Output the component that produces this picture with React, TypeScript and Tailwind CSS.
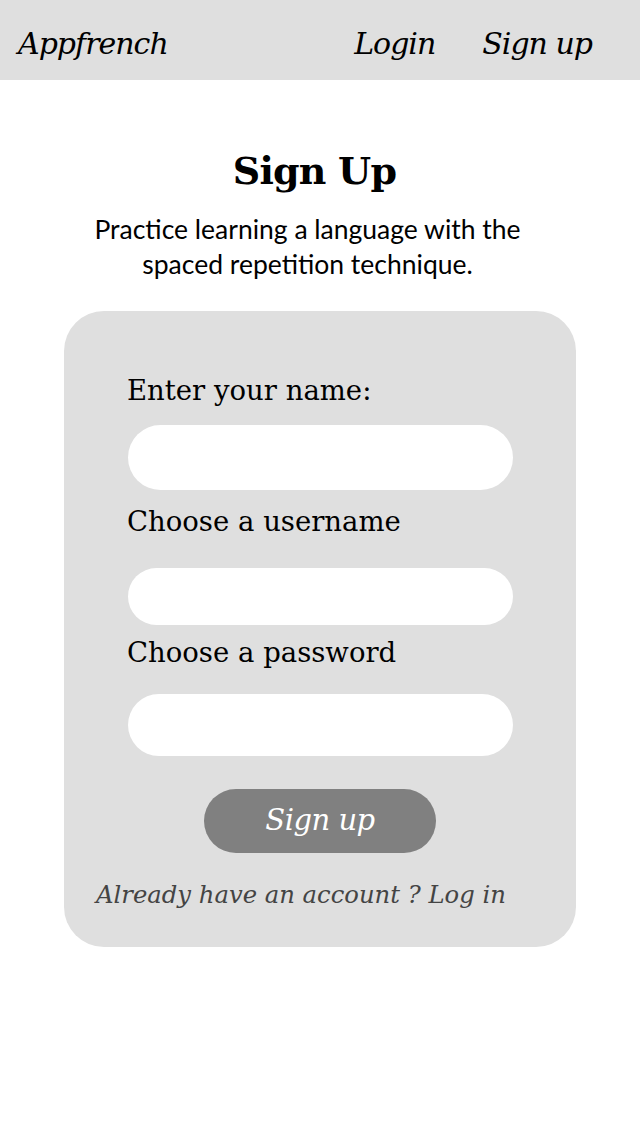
import { useState } from "react";

const slab = { fontFamily: '"DejaVu Serif", "Liberation Serif", serif' };

function Field({ label, value, onChange, type = "text", gap, h }: { label: string; value: string; onChange: (v: string) => void; type?: string; gap: string; h: string }) {
    return (
        <div className="flex flex-col">
            <label className={`text-[27.5px] leading-[30px] text-black ${gap}`} style={slab}>{label}</label>
            <input
                type={type}
                value={value}
                onChange={(e) => onChange(e.target.value)}
                className={`w-[385px] ${h} rounded-full bg-white outline-0 px-6 text-xl ml-[1px]`}
            />
        </div>
    )
}

export default function App() {
    const [name, setName] = useState("")
    const [username, setUsername] = useState("")
    const [password, setPassword] = useState("")

    return (
        <div className="w-[640px] min-h-[1136px] bg-white">
            <header className="h-[80px] bg-[#dfdfdf] flex items-center justify-between pl-[18px] pr-[48px] pt-[7px]">
                <a className="text-[30px] italic text-black tracking-[-1px]" style={slab}>Appfrench</a>
                <nav className="flex items-center gap-[47px] text-[30px] italic text-black tracking-[-1px]" style={slab}>
                    <a>Login</a>
                    <a>Sign up</a>
                </nav>
            </header>
            <main className="flex flex-col items-center">
                <h1 className="mt-[66px] mr-[11px] text-[38px] leading-[50px] font-bold text-black tracking-[-0.8px]" style={slab}>Sign Up</h1>
                <p className="mt-[16px] mr-[25px] w-[470px] text-center text-[26.5px] leading-[35px] text-black" style={{ fontFamily: '"Lato", "Noto Sans", sans-serif' }}>
                    Practice learning a language with the spaced repetition technique.
                </p>
                <form className="mt-[29px] w-[512px] h-[636px] rounded-[40px] bg-[#dfdfdf] pl-[63px] pt-[64px] flex flex-col" onSubmit={(e) => e.preventDefault()}>
                    <Field label="Enter your name:" value={name} onChange={setName} gap="mb-[20px]" h="h-[65px]" />
                    <div className="h-[16px]" />
                    <Field label="Choose a username" value={username} onChange={setUsername} gap="mb-[32px]" h="h-[57px]" />
                    <div className="h-[12px]" />
                    <Field label="Choose a password" value={password} onChange={setPassword} type="password" gap="mb-[27px]" h="h-[62px]" />
                    <button className="mt-[33px] ml-[77px] w-[232px] h-[64px] rounded-full bg-[#808080] text-white italic text-[29px] tracking-[-0.5px]" style={slab}>Sign up</button>
                    <p className="mt-[27px] -ml-[31px] text-[24.3px] leading-[30px] italic text-[#444]" style={slab}>Already have an account ? Log in</p>
                </form>
            </main>
        </div>
    )
}
